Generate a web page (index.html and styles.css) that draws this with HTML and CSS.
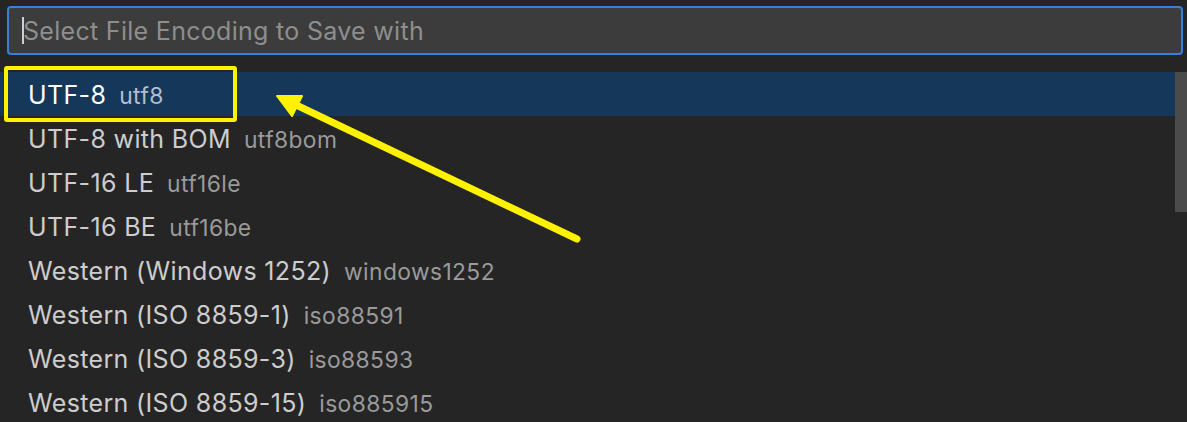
FILE: index.html
```html
<!DOCTYPE html>
<html>
<head>
<meta charset="utf-8">
<link rel="stylesheet" href="styles.css">
</head>
<body>
<div class="quick">
  <div class="input-row">
    <div class="input"><span class="caret"></span><span class="placeholder">Select File Encoding to Save with</span></div>
  </div>
  <div class="list">
    <div class="rows">
      <div class="row selected"><span class="label">UTF-8</span><span class="desc">utf8</span></div>
      <div class="row"><span class="label">UTF-8 with BOM</span><span class="desc">utf8bom</span></div>
      <div class="row"><span class="label">UTF-16 LE</span><span class="desc">utf16le</span></div>
      <div class="row"><span class="label">UTF-16 BE</span><span class="desc">utf16be</span></div>
      <div class="row"><span class="label">Western (Windows 1252)</span><span class="desc">windows1252</span></div>
      <div class="row"><span class="label">Western (ISO 8859-1)</span><span class="desc">iso88591</span></div>
      <div class="row"><span class="label">Western (ISO 8859-3)</span><span class="desc">iso88593</span></div>
      <div class="row"><span class="label">Western (ISO 8859-15)</span><span class="desc">iso885915</span></div>
    </div>
    <div class="scrollbar"></div>
  </div>
  <div class="highlight"></div>
  <svg class="arrow" width="1187" height="422" viewBox="0 0 1187 422">
    <line x1="577" y1="239" x2="292" y2="103" stroke="#fff200" stroke-width="7" stroke-linecap="round"/>
    <polygon points="277,96 302,96 292,116" fill="#fff200" stroke="#fff200" stroke-width="2" stroke-linejoin="round"/>
  </svg>
</div>
</body>
</html>
```
FILE: styles.css
```css
html, body {
  margin: 0;
  padding: 0;
  background: #252526;
  width: 1187px;
  height: 422px;
  overflow: hidden;
}
.quick {
  position: relative;
  width: 1187px;
  height: 422px;
  font-family: Inter, "Noto Sans", sans-serif;
}
.input-row {
  padding: 6px 4px 0 7px;
  height: 66px;
  box-sizing: border-box;
}
.input {
  height: 49px;
  box-sizing: border-box;
  border: 2px solid #3a7fd4;
  border-radius: 4px;
  background: #3c3c3c;
  display: flex;
  align-items: center;
  padding-left: 13px;
}
.caret {
  width: 2px;
  height: 27px;
  background: #cfcfcf;
  margin-right: -1px;
}
.placeholder {
  color: #8e8e8e;
  font-size: 25px;
  letter-spacing: 0.3px;
}
.list {
  display: flex;
  padding-top: 6px;
}
.rows {
  flex: 1;
}
.row {
  height: 44px;
  box-sizing: border-box;
  padding-top: 2px;
  display: flex;
  align-items: center;
  padding-left: 28px;
  font-size: 25px;
  letter-spacing: 0.35px;
  color: #cdcdcd;
  white-space: nowrap;
}
.row.selected {
  background: #15375a;
  color: #ffffff;
}
.desc {
  margin-left: 13px;
  font-size: 22.8px;
  letter-spacing: 0.4px;
  color: #9a9a9a;
}
.row.selected .desc {
  color: #b2bfcf;
}
.scrollbar {
  width: 12px;
  height: 140px;
  background: #4b4b4c;
}
.highlight {
  position: absolute;
  left: 4px;
  top: 66px;
  width: 233px;
  height: 56px;
  box-sizing: border-box;
  border: 4px solid #fff200;
  border-radius: 3px;
}
.arrow {
  position: absolute;
  left: 0;
  top: 0;
}
```
